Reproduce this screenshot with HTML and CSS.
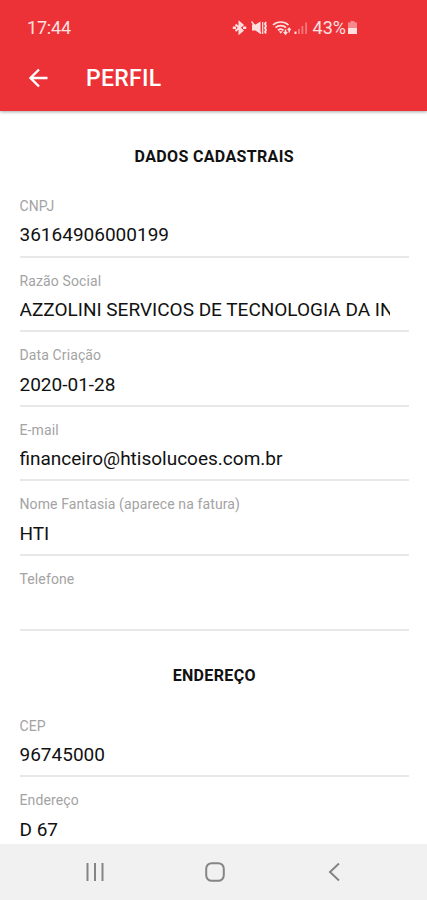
FILE: index.html
```html
<!DOCTYPE html>
<html lang="pt-BR">
<head>
    <meta charset="UTF-8">
    <meta name="viewport" content="width=device-width, initial-scale=1.0">
    <title>Perfil</title>
    <link rel="stylesheet" href="styles.css">
</head>
<body>
    <div class="app">
        <header class="header">
            <div class="status-bar">
                <span class="time">17:44</span>
                <div class="status-icons">
                    <svg class="icon-bluetooth" width="15" height="16" viewBox="0 0 15 16" fill="none" stroke="currentColor" stroke-width="2">
                        <path d="M3.5 4.5l7 6L7.5 13V2.500l3 2.500-7 6" />
                        <path d="M0.800 7.800h3.200M11 7.800h3.200" stroke-width="2.600" />
                    </svg>
                    <svg class="icon-mute" width="17" height="16" viewBox="0 0 17 16" fill="none" stroke="currentColor" stroke-width="1.500">
                        <path d="M1 4.500h3.500L9.500 1.500v12.500L4.500 10.500H1z" fill="currentColor" stroke="none" />
                        <path d="M0.500 1.500l9.500 12" />
                        <path d="M11.700 2v12" stroke-width="1.200" />
                        <path d="M15 2l-1 2 1 2-1 2 1 2-1 2 1 1.500" stroke-width="1.800" />
                    </svg>
                    <svg class="icon-wifi" width="20" height="16" viewBox="0 0 20 16" fill="none" stroke="currentColor" stroke-width="1.700">
                        <path d="M1 5c4.300-4 11.200-4 15.500 0M3.500 7.700c2.900-2.700 7.600-2.700 10.500 0M6 10.300c1.600-1.400 4-1.400 5.500 0" />
                        <path d="M6.800 11.300h4l-2 2.500z" fill="currentColor" stroke="none" />
                        <path d="M13.500 9.500v4M11.800 12l1.700 2 1.700-2M17.200 12.500V8.500M15.700 10l1.500-1.700 1.500 1.700" stroke-width="1.500" />
                    </svg>
                    <svg class="icon-signal" width="14" height="16" viewBox="0 0 14 16" fill="currentColor">
                        <path d="M0.500 11.500h2V14h-2z" />
                        <path d="M4 9h1.800v5H4zM7.500 6h1.800v8H7.500zM11.200 2.500H13V14h-1.800z" opacity="0.400" />
                    </svg>
                    <span class="battery-level">43%</span>
                    <svg class="icon-battery" width="11" height="16" viewBox="0 0 11 16" fill="currentColor">
                        <path d="M3.500 1h4v1.500H10V8H1V2.500h2.500z" opacity="0.500" />
                        <path d="M1 8h9v6H1z" />
                    </svg>
                </div>
            </div>
            <div class="toolbar">
                <svg class="icon-back" width="20" height="20" viewBox="0 0 20 20" fill="none" stroke="currentColor" stroke-width="2.400">
                    <path d="M19.500 10H2.500M11 1.500L2.500 10l8.500 8.500" />
                </svg>
                <h1 class="title">PERFIL</h1>
            </div>
        </header>

        <main class="content">
            <h2 class="section-title">DADOS CADASTRAIS</h2>
            <div class="field">
                <span class="label">CNPJ</span>
                <span class="value">36164906000199</span>
            </div>
            <div class="field">
                <span class="label">Razão Social</span>
                <span class="value">AZZOLINI SERVICOS DE TECNOLOGIA DA IN</span>
            </div>
            <div class="field">
                <span class="label">Data Criação</span>
                <span class="value">2020-01-28</span>
            </div>
            <div class="field">
                <span class="label">E-mail</span>
                <span class="value">financeiro@htisolucoes.com.br</span>
            </div>
            <div class="field">
                <span class="label">Nome Fantasia (aparece na fatura)</span>
                <span class="value">HTI</span>
            </div>
            <div class="field">
                <span class="label">Telefone</span>
                <span class="value"></span>
            </div>

            <h2 class="section-title">ENDEREÇO</h2>
            <div class="field">
                <span class="label">CEP</span>
                <span class="value">96745000</span>
            </div>
            <div class="field">
                <span class="label">Endereço</span>
                <span class="value">D 67</span>
            </div>
        </main>

        <nav class="nav-bar">
            <svg width="20" height="20" viewBox="0 0 20 20" fill="none" stroke="currentColor" stroke-width="2">
                <path d="M2.500 1v18M10 1v18M17.500 1v18" />
            </svg>
            <svg width="20" height="20" viewBox="0 0 20 20" fill="none" stroke="currentColor" stroke-width="2">
                <rect x="1.200" y="1.200" width="17.600" height="17.600" rx="5.500" />
            </svg>
            <svg width="20" height="20" viewBox="0 0 20 20" fill="none" stroke="currentColor" stroke-width="2">
                <path d="M15 1.500L6 10l9 8.500" />
            </svg>
        </nav>
    </div>
</body>
</html>
```
FILE: styles.css
```css
* {
    box-sizing: border-box;
}

body {
    margin: 0;
    font-family: Roboto, "Liberation Sans", sans-serif;
    background-color: #fff;
    color: #111;
}

.app {
    display: flex;
    flex-direction: column;
    height: 100vh;
    overflow: hidden;
}

.header {
    flex: none;
    height: 111px;
    background-color: #ec3237;
    color: #fff;
    box-shadow: 0 1px 3px rgba(0, 0, 0, 0.35);
    z-index: 1;
}

.status-bar {
    display: flex;
    align-items: center;
    justify-content: space-between;
    height: 55px;
    padding: 0 69px 0 27px;
    color: #ffe0e0;
}

.time {
    font-size: 18px;
    letter-spacing: -0.2px;
}

.status-icons {
    display: flex;
    align-items: center;
}

.icon-mute {
    margin-left: 4px;
}

.icon-wifi {
    margin-left: 4px;
}

.icon-signal {
    margin-left: 2px;
}

.battery-level {
    margin-left: 5px;
    font-size: 18px;
}

.icon-battery {
    margin-left: 1px;
}

.toolbar {
    display: flex;
    align-items: center;
    height: 46px;
    padding-left: 28px;
}

.title {
    margin: 0 0 0 38px;
    font-size: 23px;
    font-weight: 500;
    letter-spacing: 0.3px;
}

.content {
    flex: 1;
    min-height: 0;
    overflow: hidden;
    padding: 0 18px 0 19.5px;
}

.section-title {
    display: flex;
    align-items: center;
    justify-content: center;
    height: 34px;
    margin: 28px 0 10px;
    font-size: 16px;
    font-weight: 700;
    letter-spacing: 0.35px;
}

.field {
    display: flex;
    flex-direction: column;
    height: 74.6px;
    padding: 14.1px 19px 0 0;
    border-bottom: 2px solid #e8e8e8;
}

.label {
    font-size: 14px;
    line-height: 18px;
    letter-spacing: 0.12px;
    color: #a3a3a3;
}

.value {
    margin-top: 8.4px;
    font-size: 19px;
    line-height: 24px;
    white-space: nowrap;
    overflow: hidden;
}

.nav-bar {
    display: flex;
    flex: none;
    align-items: center;
    justify-content: space-between;
    height: 56px;
    padding: 0 83px 0 85px;
    background-color: #f1f1f1;
    color: #858585;
}
```
